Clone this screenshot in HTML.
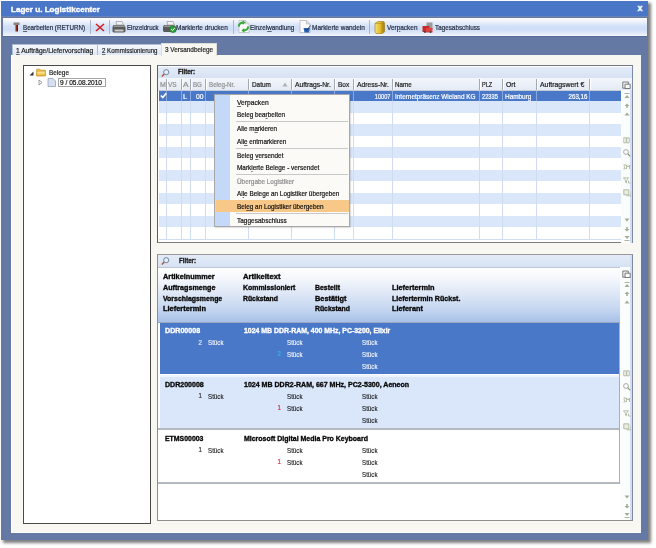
<!DOCTYPE html><html><head><meta charset="utf-8"><style>
html,body{margin:0;padding:0;}
body{width:656px;height:548px;position:relative;overflow:hidden;background:#fff;font-family:"Liberation Sans",sans-serif;}
div{box-sizing:border-box;}
.t{position:absolute;white-space:nowrap;line-height:normal;-webkit-text-stroke:0.2px currentColor;}
.b{-webkit-text-stroke:0.35px currentColor;}
u{text-decoration:underline;text-decoration-thickness:0.6px;text-underline-offset:1px;text-decoration-color:rgba(0,0,0,0.55);}
</style></head><body><div id="w" style="position:absolute;left:0;top:0;width:656px;height:548px;">
<div style="position:absolute;left:3px;top:3px;width:648px;height:540px;background:rgba(0,0,0,0.5);filter:blur(1.5px);"></div>
<div style="position:absolute;left:1px;top:1px;width:647px;height:539px;background:#647aa5;"></div>
<div style="position:absolute;left:1px;top:15.3px;width:647px;height:2.2px;background:#6b82b5;"></div>
<div style="position:absolute;left:1px;top:1px;width:647px;height:14.6px;background:#4a76c8;"></div>
<div class="t b" style="left:10.5px;top:4.67px;font-size:8.1px;color:#fff;font-weight:bold;transform:scaleX(0.9987);transform-origin:0 0;">Lager u. Logistikcenter</div>
<div class="t b" style="left:637.6px;top:3.24px;font-size:8.8px;color:#fff;font-weight:bold;">x</div>
<div style="position:absolute;left:3px;top:17.5px;width:644px;height:19.5px;background:linear-gradient(#fbfcfe 0%,#f2f5fc 15%,#d3e1f7 45%,#cfddf6 65%,#e4ecfa 88%,#f6f9fd 100%);border-bottom:1px solid #566b99;"></div>
<svg style="position:absolute;left:12px;top:21px;" width="9" height="11" viewBox="0 0 9 11"><defs><linearGradient id="st" x1="0" x2="1"><stop offset="0" stop-color="#e8a090"/><stop offset="0.5" stop-color="#8a2a18"/><stop offset="1" stop-color="#3a1a10"/></linearGradient></defs><path d="M1.5 1.5 h6 v2.5 h-6z" fill="#8a8480"/><path d="M3 4 h3 v6.5 h-3z" fill="url(#st)"/></svg>
<div class="t" style="left:22.9px;top:22.94px;font-size:7.8px;color:#1c2438;font-weight:normal;transform:scaleX(0.7991);transform-origin:0 0;"><u>B</u>earbeiten (RETURN)</div>
<div style="position:absolute;left:90px;top:19.5px;width:1px;height:14px;background:#a9b6cc;"></div>
<svg style="position:absolute;left:95px;top:23px;" width="10" height="9" viewBox="0 0 10 9"><path d="M1 1 L9 8 M9 1 L1 8" stroke="#d42020" stroke-width="1.6"/></svg>
<div style="position:absolute;left:109px;top:19.5px;width:1px;height:14px;background:#a9b6cc;"></div>
<svg style="position:absolute;left:112px;top:20px;" width="14" height="13" viewBox="0 0 14 13"><path d="M4 1.5 l6 0 l1.5 3.5 h-7z" fill="#f2f2f2" stroke="#888" stroke-width="0.6"/><path d="M1.5 5 h10.5 l1.5 2 v4.5 l-1.5 1 h-10.5 l-1 -1 v-4.5z" fill="#5a5a5a"/><path d="M2 5.5 h10 l1 1.5 h-11.5z" fill="#9a9a9a"/><path d="M2.5 9.5 h9 v2 h-9z" fill="#c8c8c8"/></svg>
<div class="t" style="left:126.5px;top:22.94px;font-size:7.8px;color:#1c2438;font-weight:normal;transform:scaleX(0.7863);transform-origin:0 0;">Einzeldruck</div>
<svg style="position:absolute;left:162.5px;top:20px;" width="14" height="13" viewBox="0 0 14 13"><path d="M4 1.5 l6 0 l1.5 3.5 h-7z" fill="#f2f2f2" stroke="#888" stroke-width="0.6"/><path d="M1 5 h10 l1.5 2 v4 l-1.5 1 h-10 l-1 -1 v-4z" fill="#5a5a5a"/><path d="M1.5 5.5 h9.5 l1 1.5 h-11z" fill="#9a9a9a"/><circle cx="10" cy="9.2" r="3.4" fill="#2e9e3a" stroke="#1e6e2a" stroke-width="0.5"/><path d="M8.2 9.2 l1.3 1.4 l2.3 -2.6" stroke="#fff" stroke-width="1" fill="none"/></svg>
<div class="t" style="left:175.9px;top:22.94px;font-size:7.8px;color:#1c2438;font-weight:normal;transform:scaleX(0.8299);transform-origin:0 0;">Markierte drucken</div>
<div style="position:absolute;left:233px;top:19.5px;width:1px;height:14px;background:#a9b6cc;"></div>
<svg style="position:absolute;left:236.5px;top:20px;" width="13" height="13" viewBox="0 0 13 13"><path d="M2 0.5 h6.5 l3.5 3.5 v8.5 h-10z" fill="#fcfcfc" stroke="#b8b8b8" stroke-width="0.7"/><path d="M8.5 0.5 v3.5 h3.5" fill="#e0e0e0" stroke="#b8b8b8" stroke-width="0.6"/><path d="M0.8 6.5 a5 5 0 0 1 5 -5 v-1.3 l2.8 2.4 l-2.8 2.4 v-1.3 a3 3 0 0 0 -3 3z" fill="#3aaa3a"/><path d="M12.2 6.5 a5 5 0 0 1 -5 5 v1.3 l-2.8 -2.4 l2.8 -2.4 v1.3 a3 3 0 0 0 3 -3z" fill="#3aaa3a"/></svg>
<div class="t" style="left:249.5px;top:22.94px;font-size:7.8px;color:#1c2438;font-weight:normal;transform:scaleX(0.8090);transform-origin:0 0;">Einzel<u>w</u>andlung</div>
<svg style="position:absolute;left:299px;top:20px;" width="13" height="13" viewBox="0 0 13 13"><path d="M1 0.5 h6.5 l3.5 3.5 v8.5 h-10z" fill="#fcfcfc" stroke="#b0b0b0" stroke-width="0.7"/><path d="M7.5 0.5 v3.5 h3.5" fill="#e0e0e0" stroke="#b0b0b0" stroke-width="0.6"/><path d="M4.5 8 h6.5 l-1 4.5 h-4.5z" fill="#2a64b0"/><path d="M6 9 l1.5 1.5 l4 -5" stroke="#1a3a70" stroke-width="0.9" fill="none"/></svg>
<div class="t" style="left:311.6px;top:22.94px;font-size:7.8px;color:#1c2438;font-weight:normal;transform:scaleX(0.8286);transform-origin:0 0;">Markierte wandeln</div>
<div style="position:absolute;left:369px;top:19.5px;width:1px;height:14px;background:#a9b6cc;"></div>
<svg style="position:absolute;left:374px;top:20.5px;" width="11" height="13" viewBox="0 0 11 13"><defs><linearGradient id="bx" x1="0" x2="1"><stop offset="0" stop-color="#f8e070"/><stop offset="0.6" stop-color="#e0b828"/><stop offset="1" stop-color="#a07a10"/></linearGradient></defs><path d="M1 2.5 l3 -2 h5.5 l1 1.5 v9 l-2.5 1.5 h-6l-1 -1.5z" fill="url(#bx)" stroke="#9a7a10" stroke-width="0.6"/><path d="M1 2.5 h7 l2.5 -1.5 M8 2.5 v10" stroke="#b08a18" stroke-width="0.6" fill="none"/></svg>
<div class="t" style="left:386.5px;top:22.94px;font-size:7.8px;color:#1c2438;font-weight:normal;transform:scaleX(0.8275);transform-origin:0 0;">Ver<u>p</u>acken</div>
<svg style="position:absolute;left:421.5px;top:22px;" width="12" height="11" viewBox="0 0 12 11"><path d="M4.5 0.5 h6 v7 h-6z" fill="#9a9a9a"/><path d="M0.5 4 h7 v6 h-7z" fill="#c82a2a"/><path d="M4 6 h6.5 v4.5 h-6.5z" fill="#e04040"/><circle cx="3" cy="10" r="1" fill="#444"/><circle cx="8.5" cy="10" r="1" fill="#444"/></svg>
<div class="t" style="left:434.6px;top:22.94px;font-size:7.8px;color:#1c2438;font-weight:normal;transform:scaleX(0.8109);transform-origin:0 0;">Tagesabschluss</div>
<div style="position:absolute;left:11px;top:55px;width:630px;height:478px;background:#f8f7f1;border-left:1px solid #fff;border-bottom:1px solid #fff;border-right:1px solid #f4f8fc;"></div>
<div style="position:absolute;left:12px;top:43.8px;width:85.5px;height:11.4px;background:linear-gradient(#f6f8fd,#dfe8f6);border:1px solid #aebcd4;border-bottom:none;border-right:none;"></div>
<div style="position:absolute;left:97px;top:43.8px;width:64px;height:11.4px;background:linear-gradient(#f6f8fd,#dfe8f6);border:1px solid #aebcd4;border-bottom:none;border-right:none;"></div>
<div style="position:absolute;left:161px;top:43px;width:55.5px;height:13px;background:#f8f7f1;border:1px solid #dcdcd8;border-bottom:none;"></div>
<div class="t" style="left:16.4px;top:46.12px;font-size:7.6px;color:#1a1a1a;font-weight:normal;transform:scaleX(0.8744);transform-origin:0 0;"><u>1</u> Aufträge/Liefervorschlag</div>
<div class="t" style="left:101.7px;top:46.12px;font-size:7.6px;color:#1a1a1a;font-weight:normal;transform:scaleX(0.8061);transform-origin:0 0;"><u>2</u> Kommissionierung</div>
<div class="t" style="left:165.1px;top:44.82px;font-size:7.6px;color:#1a1a1a;font-weight:normal;transform:scaleX(0.8450);transform-origin:0 0;">3 Versandbelege</div>
<div style="position:absolute;left:23px;top:65px;width:128px;height:459px;background:#fff;border:1px solid #4a4a4a;"></div>
<svg style="position:absolute;left:28.5px;top:70.5px;" width="5" height="5" viewBox="0 0 5 5"><path d="M4.5 0.5 v4 h-4z" fill="#333"/></svg>
<svg style="position:absolute;left:35.5px;top:68px;" width="10" height="8.5" viewBox="0 0 10 8.5"><defs><linearGradient id="fd" x1="0" y1="0" x2="0" y2="1"><stop offset="0" stop-color="#fff2b0"/><stop offset="1" stop-color="#e8b830"/></linearGradient></defs><path d="M0.7 1.2 h3.2 l1 1 h4.4 v5.6 h-8.6z" fill="#f0c850" stroke="#c89020" stroke-width="0.7"/><path d="M0.7 3.2 h8.6 v4.6 h-8.6z" fill="url(#fd)" stroke="#c89020" stroke-width="0.6"/></svg>
<div class="t" style="left:48.5px;top:69.07px;font-size:7px;color:#222;font-weight:normal;transform:scaleX(0.9176);transform-origin:0 0;">Belege</div>
<svg style="position:absolute;left:38px;top:79px;" width="5" height="7" viewBox="0 0 5 7"><path d="M1 1 l3 2.5 l-3 2.5z" fill="none" stroke="#888" stroke-width="0.8"/></svg>
<svg style="position:absolute;left:47px;top:78px;" width="9" height="9" viewBox="0 0 9 9"><path d="M1 0.5 h5 l2.5 2.5 v5.5 h-7.5z" fill="#d8e0f0" stroke="#8898b8" stroke-width="0.7"/></svg>
<div style="position:absolute;left:57.5px;top:78px;width:48px;height:8.5px;background:#fff;border:1px solid #a4a4a4;"></div>
<div class="t" style="left:59.5px;top:78.67px;font-size:7px;color:#111;font-weight:normal;transform:scaleX(0.9384);transform-origin:0 0;">9 / 05.08.2010</div>
<div style="position:absolute;left:157px;top:65.4px;width:475.5px;height:178.1px;background:#fff;border:1px solid #5e5e5e;border-top-color:#6e7482;border-bottom-color:#7e7e7e;border-right-color:#7d8aa6;"></div>
<div style="position:absolute;left:158px;top:66.5px;width:473.5px;height:11px;background:linear-gradient(#e4ebf7,#d6e2f4);"></div>
<svg style="position:absolute;left:161px;top:68.5px;" width="9" height="8" viewBox="0 0 9 8"><circle cx="5.2" cy="3.2" r="2.6" fill="#dfeefc" stroke="#6a7a90" stroke-width="0.9"/><path d="M3.3 5 L0.8 7.5" stroke="#b05030" stroke-width="1.4"/></svg>
<div class="t b" style="left:178.3px;top:68.27px;font-size:7px;color:#222;font-weight:bold;transform:scaleX(0.8743);transform-origin:0 0;">Filter:</div>
<div style="position:absolute;left:158px;top:77.5px;width:473.5px;height:13.3px;background:linear-gradient(#f3f6fb,#e4ebf6);border-bottom:1px solid #c4ccda;"></div>
<div style="position:absolute;left:166.3px;top:79px;width:1px;height:10.5px;background:#a4aab4;border-right:1px solid #fff;width:2px;"></div>
<div style="position:absolute;left:181.0px;top:79px;width:1px;height:10.5px;background:#a4aab4;border-right:1px solid #fff;width:2px;"></div>
<div style="position:absolute;left:190.3px;top:79px;width:1px;height:10.5px;background:#a4aab4;border-right:1px solid #fff;width:2px;"></div>
<div style="position:absolute;left:205.0px;top:79px;width:1px;height:10.5px;background:#a4aab4;border-right:1px solid #fff;width:2px;"></div>
<div style="position:absolute;left:248.3px;top:79px;width:1px;height:10.5px;background:#a4aab4;border-right:1px solid #fff;width:2px;"></div>
<div style="position:absolute;left:291.3px;top:79px;width:1px;height:10.5px;background:#a4aab4;border-right:1px solid #fff;width:2px;"></div>
<div style="position:absolute;left:334.3px;top:79px;width:1px;height:10.5px;background:#a4aab4;border-right:1px solid #fff;width:2px;"></div>
<div style="position:absolute;left:352.9px;top:79px;width:1px;height:10.5px;background:#a4aab4;border-right:1px solid #fff;width:2px;"></div>
<div style="position:absolute;left:391.9px;top:79px;width:1px;height:10.5px;background:#a4aab4;border-right:1px solid #fff;width:2px;"></div>
<div style="position:absolute;left:478.5px;top:79px;width:1px;height:10.5px;background:#a4aab4;border-right:1px solid #fff;width:2px;"></div>
<div style="position:absolute;left:502.2px;top:79px;width:1px;height:10.5px;background:#a4aab4;border-right:1px solid #fff;width:2px;"></div>
<div style="position:absolute;left:536.3px;top:79px;width:1px;height:10.5px;background:#a4aab4;border-right:1px solid #fff;width:2px;"></div>
<div style="position:absolute;left:588.5px;top:79px;width:1px;height:10.5px;background:#a4aab4;border-right:1px solid #fff;width:2px;"></div>
<div class="t" style="left:160.0px;top:80.87px;font-size:7px;color:#8e8e8e;font-weight:normal;transform:scaleX(0.9947);transform-origin:0 0;">M</div>
<div class="t" style="left:168.3px;top:80.87px;font-size:7px;color:#8e8e8e;font-weight:normal;transform:scaleX(0.9316);transform-origin:0 0;">VS</div>
<div class="t" style="left:182.9px;top:80.87px;font-size:7px;color:#8e8e8e;font-weight:normal;transform:scaleX(1.1779);transform-origin:0 0;">A</div>
<div class="t" style="left:193.2px;top:80.87px;font-size:7px;color:#8e8e8e;font-weight:normal;transform:scaleX(0.8800);transform-origin:0 0;">BG</div>
<div class="t" style="left:208.7px;top:80.87px;font-size:7px;color:#8e8e8e;font-weight:normal;transform:scaleX(0.8877);transform-origin:0 0;">Beleg-Nr.</div>
<div class="t" style="left:251.7px;top:80.87px;font-size:7px;color:#181818;font-weight:normal;transform:scaleX(0.9119);transform-origin:0 0;">Datum</div>
<svg style="position:absolute;left:282px;top:82px;" width="6" height="5" viewBox="0 0 6 5"><path d="M0.5 4.5 L3 0.5 L5.5 4.5z" fill="#b0b0b0"/></svg>
<div class="t" style="left:294.9px;top:80.87px;font-size:7px;color:#181818;font-weight:normal;transform:scaleX(0.9587);transform-origin:0 0;">Auftrags-Nr.</div>
<div class="t" style="left:338px;top:80.87px;font-size:7px;color:#181818;font-weight:normal;transform:scaleX(0.9368);transform-origin:0 0;">Box</div>
<div class="t" style="left:357px;top:80.87px;font-size:7px;color:#181818;font-weight:normal;transform:scaleX(0.9619);transform-origin:0 0;">Adress-Nr.</div>
<div class="t" style="left:395.4px;top:80.87px;font-size:7px;color:#181818;font-weight:normal;transform:scaleX(0.8891);transform-origin:0 0;">Name</div>
<div class="t" style="left:482.2px;top:80.87px;font-size:7px;color:#181818;font-weight:normal;transform:scaleX(0.7946);transform-origin:0 0;">PLZ</div>
<div class="t" style="left:505.9px;top:80.87px;font-size:7px;color:#181818;font-weight:normal;transform:scaleX(0.9774);transform-origin:0 0;">Ort</div>
<div class="t" style="left:539.6px;top:80.87px;font-size:7px;color:#181818;font-weight:normal;transform:scaleX(0.9794);transform-origin:0 0;">Auftragswert €</div>
<div style="position:absolute;left:159px;top:90.8px;width:462px;height:10.33px;background:#4a78c8;"></div>
<div style="position:absolute;left:159px;top:101.08px;width:462px;height:11.530000000000001px;background:#dae7fb;"></div>
<div style="position:absolute;left:159px;top:112.56px;width:462px;height:11.530000000000001px;background:#ffffff;"></div>
<div style="position:absolute;left:159px;top:124.04px;width:462px;height:11.530000000000001px;background:#dae7fb;"></div>
<div style="position:absolute;left:159px;top:135.52px;width:462px;height:11.530000000000001px;background:#ffffff;"></div>
<div style="position:absolute;left:159px;top:147.0px;width:462px;height:11.530000000000001px;background:#dae7fb;"></div>
<div style="position:absolute;left:159px;top:158.48px;width:462px;height:11.530000000000001px;background:#ffffff;"></div>
<div style="position:absolute;left:159px;top:169.96px;width:462px;height:11.530000000000001px;background:#dae7fb;"></div>
<div style="position:absolute;left:159px;top:181.44px;width:462px;height:11.530000000000001px;background:#ffffff;"></div>
<div style="position:absolute;left:159px;top:192.92px;width:462px;height:11.530000000000001px;background:#dae7fb;"></div>
<div style="position:absolute;left:159px;top:204.4px;width:462px;height:11.530000000000001px;background:#ffffff;"></div>
<div style="position:absolute;left:159px;top:215.88px;width:462px;height:11.530000000000001px;background:#dae7fb;"></div>
<div style="position:absolute;left:159px;top:227.36px;width:462px;height:11.530000000000001px;background:#ffffff;"></div>
<div style="position:absolute;left:166.3px;top:90.8px;width:1px;height:148px;background:#d0dcf2;"></div>
<div style="position:absolute;left:181.0px;top:90.8px;width:1px;height:148px;background:#d0dcf2;"></div>
<div style="position:absolute;left:190.3px;top:90.8px;width:1px;height:148px;background:#d0dcf2;"></div>
<div style="position:absolute;left:205.0px;top:90.8px;width:1px;height:148px;background:#d0dcf2;"></div>
<div style="position:absolute;left:248.3px;top:90.8px;width:1px;height:148px;background:#d0dcf2;"></div>
<div style="position:absolute;left:291.3px;top:90.8px;width:1px;height:148px;background:#d0dcf2;"></div>
<div style="position:absolute;left:334.3px;top:90.8px;width:1px;height:148px;background:#d0dcf2;"></div>
<div style="position:absolute;left:352.9px;top:90.8px;width:1px;height:148px;background:#d0dcf2;"></div>
<div style="position:absolute;left:391.9px;top:90.8px;width:1px;height:148px;background:#d0dcf2;"></div>
<div style="position:absolute;left:478.5px;top:90.8px;width:1px;height:148px;background:#d0dcf2;"></div>
<div style="position:absolute;left:502.2px;top:90.8px;width:1px;height:148px;background:#d0dcf2;"></div>
<div style="position:absolute;left:536.3px;top:90.8px;width:1px;height:148px;background:#d0dcf2;"></div>
<div style="position:absolute;left:588.5px;top:90.8px;width:1px;height:148px;background:#d0dcf2;"></div>
<div style="position:absolute;left:159px;top:238.6px;width:462px;height:1px;background:#d0dcf2;"></div>
<div style="position:absolute;left:166.3px;top:90.8px;width:1px;height:10.3px;background:#8aa8e0;"></div>
<div style="position:absolute;left:181.0px;top:90.8px;width:1px;height:10.3px;background:#8aa8e0;"></div>
<div style="position:absolute;left:190.3px;top:90.8px;width:1px;height:10.3px;background:#8aa8e0;"></div>
<div style="position:absolute;left:205.0px;top:90.8px;width:1px;height:10.3px;background:#8aa8e0;"></div>
<div style="position:absolute;left:248.3px;top:90.8px;width:1px;height:10.3px;background:#8aa8e0;"></div>
<div style="position:absolute;left:291.3px;top:90.8px;width:1px;height:10.3px;background:#8aa8e0;"></div>
<div style="position:absolute;left:334.3px;top:90.8px;width:1px;height:10.3px;background:#8aa8e0;"></div>
<div style="position:absolute;left:352.9px;top:90.8px;width:1px;height:10.3px;background:#8aa8e0;"></div>
<div style="position:absolute;left:391.9px;top:90.8px;width:1px;height:10.3px;background:#8aa8e0;"></div>
<div style="position:absolute;left:478.5px;top:90.8px;width:1px;height:10.3px;background:#8aa8e0;"></div>
<div style="position:absolute;left:502.2px;top:90.8px;width:1px;height:10.3px;background:#8aa8e0;"></div>
<div style="position:absolute;left:536.3px;top:90.8px;width:1px;height:10.3px;background:#8aa8e0;"></div>
<div style="position:absolute;left:588.5px;top:90.8px;width:1px;height:10.3px;background:#8aa8e0;"></div>
<svg style="position:absolute;left:160px;top:92px;" width="7" height="7" viewBox="0 0 7 7"><path d="M0.8 3.5 L2.8 5.6 L6.2 1.2" stroke="#fff" stroke-width="1.6" fill="none"/></svg>
<div class="t" style="left:183.2px;top:92.57px;font-size:7px;color:#fff;font-weight:normal;transform:scaleX(1.0276);transform-origin:0 0;">L</div>
<div class="t" style="left:195.5px;top:92.57px;font-size:7px;color:#fff;font-weight:normal;transform:scaleX(0.9634);transform-origin:0 0;">00</div>
<div class="t" style="right:266px;top:92.57px;font-size:7px;color:#fff;font-weight:normal;transform:scaleX(0.8015);transform-origin:100% 0;">10007</div>
<div class="t" style="left:394.9px;top:92.57px;font-size:7px;color:#fff;font-weight:normal;transform:scaleX(0.9155);transform-origin:0 0;">Internetpräsenz Wieland KG</div>
<div class="t" style="left:481.5px;top:92.57px;font-size:7px;color:#fff;font-weight:normal;transform:scaleX(0.8118);transform-origin:0 0;">22335</div>
<div class="t" style="left:504.6px;top:92.57px;font-size:7px;color:#fff;font-weight:normal;transform:scaleX(0.9171);transform-origin:0 0;">Hamburg</div>
<div class="t" style="right:68.70000000000005px;top:92.57px;font-size:7px;color:#fff;font-weight:normal;transform:scaleX(0.8782);transform-origin:100% 0;">263,16</div>
<div style="position:absolute;left:621px;top:89.5px;width:10.5px;height:153px;background:#fbfcfe;"></div>
<div style="position:absolute;left:629.5px;top:89.5px;width:2px;height:153px;background:#d4def0;"></div>
<svg style="position:absolute;left:621.5px;top:80.5px;" width="9" height="8" viewBox="0 0 9 8"><path d="M0.8 1 h5.5 v6.2 h-5.5z" fill="#f4f4f4" stroke="#6e6e6e" stroke-width="0.9"/><path d="M3 3.2 h5.2 v4.3 h-5.2z" fill="#fafafa" stroke="#6e6e6e" stroke-width="0.9"/></svg>
<svg style="position:absolute;left:623.5px;top:92.5px;" width="6" height="5" viewBox="0 0 6 5"><path d="M0.5 0.5 h5" stroke="#a3ad93" stroke-width="0.9"/><path d="M0.5 5 L3 2 L5.5 5z" fill="#a3ad93"/></svg>
<svg style="position:absolute;left:623.5px;top:102.5px;" width="6" height="5" viewBox="0 0 6 5"><path d="M0.5 3 L3 0.5 L5.5 3z M2.2 3 h1.6 v2 h-1.6z" fill="#a3ad93"/></svg>
<svg style="position:absolute;left:623.5px;top:111.5px;" width="6" height="5" viewBox="0 0 6 5"><path d="M0.5 3.5 L3 0.5 L5.5 3.5z" fill="#a3ad93"/></svg>
<svg style="position:absolute;left:623.5px;top:218px;" width="6" height="5" viewBox="0 0 6 5"><path d="M0.5 0.5 L3 3.5 L5.5 0.5z" fill="#a3ad93"/></svg>
<svg style="position:absolute;left:623.5px;top:226.5px;" width="6" height="5" viewBox="0 0 6 5"><path d="M2.2 0 h1.6 v2 h-1.6z M0.5 2 L3 4.5 L5.5 2z" fill="#a3ad93"/></svg>
<svg style="position:absolute;left:623.5px;top:235.5px;" width="6" height="5" viewBox="0 0 6 5"><path d="M0.5 0 L3 3 L5.5 0z" fill="#a3ad93"/><path d="M0.5 4.5 h5" stroke="#a3ad93" stroke-width="0.9"/></svg>
<svg style="position:absolute;left:622.5px;top:136.5px;" width="8" height="8" viewBox="0 0 8 8"><path d="M0.8 0.8 h2.4 v5 h-2.4z M3.8 0.8 h2.4 v5 h-2.4z" fill="none" stroke="#a3ad93" stroke-width="0.8"/></svg>
<svg style="position:absolute;left:622.5px;top:149px;" width="8" height="8" viewBox="0 0 8 8"><circle cx="3" cy="3" r="2.4" fill="none" stroke="#a0a0a0" stroke-width="0.9"/><path d="M4.7 4.7 L7.3 7.3" stroke="#8a9470" stroke-width="1.2"/></svg>
<svg style="position:absolute;left:622.5px;top:163.5px;" width="8" height="8" viewBox="0 0 8 8"><path d="M0.5 0.8 h2 l-1.5 2 l1.5 2 h-2 M3.5 5 v-4 l1.5 2 l1.5 -2 v4" fill="none" stroke="#a3ad93" stroke-width="0.8"/></svg>
<svg style="position:absolute;left:622.5px;top:176.5px;" width="8" height="8" viewBox="0 0 8 8"><path d="M0.5 0.8 h5 l-2 2.5 v2.5 l-1 -0.6 v-1.9z" fill="none" stroke="#a3ad93" stroke-width="0.8"/><path d="M5.5 3.5 v2.5 h2" stroke="#a3ad93" stroke-width="0.8" fill="none"/></svg>
<svg style="position:absolute;left:622.5px;top:188.5px;" width="8" height="8" viewBox="0 0 8 8"><path d="M0.8 0.8 h5 v5 h-5z" fill="#e8eee0" stroke="#a3ad93" stroke-width="0.8"/><path d="M3.5 6.8 h4.5 v-3" fill="none" stroke="#a3ad93" stroke-width="0.8"/></svg>
<div style="position:absolute;left:157px;top:254px;width:475.5px;height:267px;background:#fff;border:1px solid #8e8e8e;border-top-color:#9a9a9a;border-right-color:#7d8aa6;"></div>
<div style="position:absolute;left:158px;top:255px;width:473.5px;height:12px;background:linear-gradient(#e4ebf7,#d6e2f4);"></div>
<svg style="position:absolute;left:161px;top:257px;" width="9" height="8" viewBox="0 0 9 8"><circle cx="5.2" cy="3.2" r="2.6" fill="#dfeefc" stroke="#6a7a90" stroke-width="0.9"/><path d="M3.3 5 L0.8 7.5" stroke="#b05030" stroke-width="1.4"/></svg>
<div class="t b" style="left:178.5px;top:256.87px;font-size:7px;color:#222;font-weight:bold;transform:scaleX(0.8743);transform-origin:0 0;">Filter:</div>
<div style="position:absolute;left:158px;top:267px;width:462.5px;height:55.5px;background:linear-gradient(#ffffff 0%,#f0f4fb 25%,#c9d9f1 72%,#a9c1e9 100%);border-right:1px solid #97a3b6;border-top:1px solid #c0c8d6;border-bottom:1px solid #9aa8c0;"></div>
<div class="t b" style="left:163.3px;top:271.90px;font-size:7.4px;color:#080808;font-weight:bold;transform:scaleX(0.9899);transform-origin:0 0;">Artikelnummer</div>
<div class="t b" style="left:163.3px;top:282.80px;font-size:7.4px;color:#080808;font-weight:bold;transform:scaleX(0.9673);transform-origin:0 0;">Auftragsmenge</div>
<div class="t b" style="left:163.3px;top:293.60px;font-size:7.4px;color:#080808;font-weight:bold;transform:scaleX(0.9384);transform-origin:0 0;">Vorschlagsmenge</div>
<div class="t b" style="left:163.3px;top:304.10px;font-size:7.4px;color:#080808;font-weight:bold;transform:scaleX(1.0055);transform-origin:0 0;">Liefertermin</div>
<div class="t b" style="left:242.6px;top:271.90px;font-size:7.4px;color:#080808;font-weight:bold;transform:scaleX(1.0362);transform-origin:0 0;">Artikeltext</div>
<div class="t b" style="left:242.6px;top:282.80px;font-size:7.4px;color:#080808;font-weight:bold;transform:scaleX(0.9388);transform-origin:0 0;">Kommissioniert</div>
<div class="t b" style="left:242.6px;top:293.60px;font-size:7.4px;color:#080808;font-weight:bold;transform:scaleX(0.9252);transform-origin:0 0;">Rückstand</div>
<div class="t b" style="left:315.2px;top:282.80px;font-size:7.4px;color:#080808;font-weight:bold;transform:scaleX(0.9353);transform-origin:0 0;">Bestellt</div>
<div class="t b" style="left:315.2px;top:293.60px;font-size:7.4px;color:#080808;font-weight:bold;transform:scaleX(0.9950);transform-origin:0 0;">Bestätigt</div>
<div class="t b" style="left:315.2px;top:304.10px;font-size:7.4px;color:#080808;font-weight:bold;transform:scaleX(0.9252);transform-origin:0 0;">Rückstand</div>
<div class="t b" style="left:391.5px;top:282.80px;font-size:7.4px;color:#080808;font-weight:bold;transform:scaleX(0.9938);transform-origin:0 0;">Liefertermin</div>
<div class="t b" style="left:391.5px;top:293.60px;font-size:7.4px;color:#080808;font-weight:bold;transform:scaleX(0.9574);transform-origin:0 0;">Liefertermin Rückst.</div>
<div class="t b" style="left:391.5px;top:304.10px;font-size:7.4px;color:#080808;font-weight:bold;transform:scaleX(0.9920);transform-origin:0 0;">Lieferant</div>
<div style="position:absolute;left:159.5px;top:322.6px;width:460.5px;height:51.89999999999998px;background:#4a78c8;"></div>
<div class="t b" style="left:164.6px;top:325.80px;font-size:7.4px;color:#ffffff;font-weight:bold;transform:scaleX(0.9615);transform-origin:0 0;">DDR00008</div>
<div class="t b" style="left:243.5px;top:325.80px;font-size:7.4px;color:#ffffff;font-weight:bold;transform:scaleX(0.9350);transform-origin:0 0;">1024 MB DDR-RAM, 400 MHz, PC-3200, Elixir</div>
<div class="t" style="right:454.5px;top:338.56px;font-size:7px;color:#e0e6f0;font-weight:normal;transform:scaleX(0.8734);transform-origin:100% 0;">2</div>
<div class="t" style="left:207.6px;top:338.38px;font-size:7.2px;color:#ffffff;font-weight:normal;transform:scaleX(0.8608);transform-origin:0 0;-webkit-text-stroke:0.08px currentColor;">Stück</div>
<div class="t" style="left:286.5px;top:338.38px;font-size:7.2px;color:#ffffff;font-weight:normal;transform:scaleX(0.8608);transform-origin:0 0;-webkit-text-stroke:0.08px currentColor;">Stück</div>
<div class="t" style="right:375.2px;top:350.37px;font-size:7px;color:#30b4f0;font-weight:normal;transform:scaleX(0.8734);transform-origin:100% 0;">2</div>
<div class="t" style="left:286.5px;top:350.18px;font-size:7.2px;color:#ffffff;font-weight:normal;transform:scaleX(0.8608);transform-origin:0 0;-webkit-text-stroke:0.08px currentColor;">Stück</div>
<div class="t" style="left:361.5px;top:338.38px;font-size:7.2px;color:#ffffff;font-weight:normal;transform:scaleX(0.8608);transform-origin:0 0;-webkit-text-stroke:0.08px currentColor;">Stück</div>
<div class="t" style="left:361.5px;top:350.18px;font-size:7.2px;color:#ffffff;font-weight:normal;transform:scaleX(0.8608);transform-origin:0 0;-webkit-text-stroke:0.08px currentColor;">Stück</div>
<div class="t" style="left:361.5px;top:362.48px;font-size:7.2px;color:#ffffff;font-weight:normal;transform:scaleX(0.8608);transform-origin:0 0;-webkit-text-stroke:0.08px currentColor;">Stück</div>
<div style="position:absolute;left:159.5px;top:374.5px;width:460.5px;height:55.30000000000001px;background:#dae7fb;"></div>
<div style="position:absolute;left:159.5px;top:374.5px;width:460.5px;height:2px;background:#eef3fb;"></div>
<div style="position:absolute;left:158px;top:428.2px;width:462px;height:1.6px;background:#b4b8bf;"></div>
<div class="t b" style="left:164.6px;top:379.60px;font-size:7.4px;color:#080808;font-weight:bold;transform:scaleX(0.9528);transform-origin:0 0;">DDR200008</div>
<div class="t b" style="left:243.5px;top:379.60px;font-size:7.4px;color:#080808;font-weight:bold;transform:scaleX(0.9518);transform-origin:0 0;">1024 MB DDR2-RAM, 667 MHz, PC2-5300, Aeneon</div>
<div class="t" style="right:454.5px;top:392.37px;font-size:7px;color:#333;font-weight:normal;transform:scaleX(0.8734);transform-origin:100% 0;">1</div>
<div class="t" style="left:207.6px;top:392.18px;font-size:7.2px;color:#080808;font-weight:normal;transform:scaleX(0.8608);transform-origin:0 0;-webkit-text-stroke:0.08px currentColor;">Stück</div>
<div class="t" style="left:286.5px;top:392.18px;font-size:7.2px;color:#080808;font-weight:normal;transform:scaleX(0.8608);transform-origin:0 0;-webkit-text-stroke:0.08px currentColor;">Stück</div>
<div class="t" style="right:375.2px;top:404.17px;font-size:7px;color:#d83030;font-weight:normal;transform:scaleX(0.8734);transform-origin:100% 0;">1</div>
<div class="t" style="left:286.5px;top:403.98px;font-size:7.2px;color:#080808;font-weight:normal;transform:scaleX(0.8608);transform-origin:0 0;-webkit-text-stroke:0.08px currentColor;">Stück</div>
<div class="t" style="left:361.5px;top:392.18px;font-size:7.2px;color:#080808;font-weight:normal;transform:scaleX(0.8608);transform-origin:0 0;-webkit-text-stroke:0.08px currentColor;">Stück</div>
<div class="t" style="left:361.5px;top:403.98px;font-size:7.2px;color:#080808;font-weight:normal;transform:scaleX(0.8608);transform-origin:0 0;-webkit-text-stroke:0.08px currentColor;">Stück</div>
<div class="t" style="left:361.5px;top:416.28px;font-size:7.2px;color:#080808;font-weight:normal;transform:scaleX(0.8608);transform-origin:0 0;-webkit-text-stroke:0.08px currentColor;">Stück</div>
<div style="position:absolute;left:159.5px;top:429.8px;width:460.5px;height:54.0px;background:#ffffff;"></div>
<div style="position:absolute;left:158px;top:482.2px;width:462px;height:1.6px;background:#b4b8bf;"></div>
<div class="t b" style="left:164.6px;top:433.50px;font-size:7.4px;color:#080808;font-weight:bold;transform:scaleX(0.9360);transform-origin:0 0;">ETMS00003</div>
<div class="t b" style="left:243.5px;top:433.50px;font-size:7.4px;color:#080808;font-weight:bold;transform:scaleX(0.9433);transform-origin:0 0;">Microsoft Digital Media Pro Keyboard</div>
<div class="t" style="right:454.5px;top:446.26px;font-size:7px;color:#333;font-weight:normal;transform:scaleX(0.8734);transform-origin:100% 0;">1</div>
<div class="t" style="left:207.6px;top:446.08px;font-size:7.2px;color:#080808;font-weight:normal;transform:scaleX(0.8608);transform-origin:0 0;-webkit-text-stroke:0.08px currentColor;">Stück</div>
<div class="t" style="left:286.5px;top:446.08px;font-size:7.2px;color:#080808;font-weight:normal;transform:scaleX(0.8608);transform-origin:0 0;-webkit-text-stroke:0.08px currentColor;">Stück</div>
<div class="t" style="right:375.2px;top:458.06px;font-size:7px;color:#d83030;font-weight:normal;transform:scaleX(0.8734);transform-origin:100% 0;">1</div>
<div class="t" style="left:286.5px;top:457.88px;font-size:7.2px;color:#080808;font-weight:normal;transform:scaleX(0.8608);transform-origin:0 0;-webkit-text-stroke:0.08px currentColor;">Stück</div>
<div class="t" style="left:361.5px;top:446.08px;font-size:7.2px;color:#080808;font-weight:normal;transform:scaleX(0.8608);transform-origin:0 0;-webkit-text-stroke:0.08px currentColor;">Stück</div>
<div class="t" style="left:361.5px;top:457.88px;font-size:7.2px;color:#080808;font-weight:normal;transform:scaleX(0.8608);transform-origin:0 0;-webkit-text-stroke:0.08px currentColor;">Stück</div>
<div class="t" style="left:361.5px;top:470.18px;font-size:7.2px;color:#080808;font-weight:normal;transform:scaleX(0.8608);transform-origin:0 0;-webkit-text-stroke:0.08px currentColor;">Stück</div>
<div style="position:absolute;left:620px;top:267px;width:11.5px;height:253px;background:#fbfcfe;"></div>
<div style="position:absolute;left:619.3px;top:322.5px;width:1px;height:161px;background:#a8b0bc;"></div>
<div style="position:absolute;left:629.5px;top:255px;width:2px;height:265px;background:#d4def0;"></div>
<svg style="position:absolute;left:621.5px;top:270px;" width="9" height="8" viewBox="0 0 9 8"><path d="M0.8 1 h5.5 v6.2 h-5.5z" fill="#f4f4f4" stroke="#6e6e6e" stroke-width="0.9"/><path d="M3 3.2 h5.2 v4.3 h-5.2z" fill="#fafafa" stroke="#6e6e6e" stroke-width="0.9"/></svg>
<svg style="position:absolute;left:623.5px;top:282px;" width="6" height="5" viewBox="0 0 6 5"><path d="M0.5 0.5 h5" stroke="#a3ad93" stroke-width="0.9"/><path d="M0.5 5 L3 2 L5.5 5z" fill="#a3ad93"/></svg>
<svg style="position:absolute;left:623.5px;top:290.5px;" width="6" height="5" viewBox="0 0 6 5"><path d="M0.5 3 L3 0.5 L5.5 3z M2.2 3 h1.6 v2 h-1.6z" fill="#a3ad93"/></svg>
<svg style="position:absolute;left:623.5px;top:299.5px;" width="6" height="5" viewBox="0 0 6 5"><path d="M0.5 3.5 L3 0.5 L5.5 3.5z" fill="#a3ad93"/></svg>
<svg style="position:absolute;left:623.5px;top:494.5px;" width="6" height="5" viewBox="0 0 6 5"><path d="M0.5 0.5 L3 3.5 L5.5 0.5z" fill="#a3ad93"/></svg>
<svg style="position:absolute;left:623.5px;top:503.5px;" width="6" height="5" viewBox="0 0 6 5"><path d="M2.2 0 h1.6 v2 h-1.6z M0.5 2 L3 4.5 L5.5 2z" fill="#a3ad93"/></svg>
<svg style="position:absolute;left:623.5px;top:512.5px;" width="6" height="5" viewBox="0 0 6 5"><path d="M0.5 0 L3 3 L5.5 0z" fill="#a3ad93"/><path d="M0.5 4.5 h5" stroke="#a3ad93" stroke-width="0.9"/></svg>
<svg style="position:absolute;left:622.5px;top:369.5px;" width="8" height="8" viewBox="0 0 8 8"><path d="M0.8 0.8 h2.4 v5 h-2.4z M3.8 0.8 h2.4 v5 h-2.4z" fill="none" stroke="#a3ad93" stroke-width="0.8"/></svg>
<svg style="position:absolute;left:622.5px;top:383px;" width="8" height="8" viewBox="0 0 8 8"><circle cx="3" cy="3" r="2.4" fill="none" stroke="#a0a0a0" stroke-width="0.9"/><path d="M4.7 4.7 L7.3 7.3" stroke="#8a9470" stroke-width="1.2"/></svg>
<svg style="position:absolute;left:622.5px;top:397px;" width="8" height="8" viewBox="0 0 8 8"><path d="M0.5 0.8 h2 l-1.5 2 l1.5 2 h-2 M3.5 5 v-4 l1.5 2 l1.5 -2 v4" fill="none" stroke="#a3ad93" stroke-width="0.8"/></svg>
<svg style="position:absolute;left:622.5px;top:410px;" width="8" height="8" viewBox="0 0 8 8"><path d="M0.5 0.8 h5 l-2 2.5 v2.5 l-1 -0.6 v-1.9z" fill="none" stroke="#a3ad93" stroke-width="0.8"/><path d="M5.5 3.5 v2.5 h2" stroke="#a3ad93" stroke-width="0.8" fill="none"/></svg>
<svg style="position:absolute;left:622.5px;top:423px;" width="8" height="8" viewBox="0 0 8 8"><path d="M0.8 0.8 h5 v5 h-5z" fill="#e8eee0" stroke="#a3ad93" stroke-width="0.8"/><path d="M3.5 6.8 h4.5 v-3" fill="none" stroke="#a3ad93" stroke-width="0.8"/></svg>
<div style="position:absolute;left:214.3px;top:93.7px;width:136px;height:133.5px;background:#fbfaf6;border:1px solid #a8a8a8;box-shadow:1px 1px 1px rgba(0,0,0,0.12);"></div>
<div style="position:absolute;left:215.3px;top:94.7px;width:14.5px;height:131.5px;background:#c4d8f7;"></div>
<div style="position:absolute;left:215.5px;top:200.3px;width:133px;height:11.8px;background:#f8c888;"></div>
<div style="position:absolute;left:236px;top:121.0px;width:111.5px;height:1px;background:#c8c8c8;"></div>
<div style="position:absolute;left:236px;top:147.7px;width:111.5px;height:1px;background:#c8c8c8;"></div>
<div style="position:absolute;left:236px;top:174.2px;width:111.5px;height:1px;background:#c8c8c8;"></div>
<div style="position:absolute;left:236px;top:213.2px;width:111.5px;height:1px;background:#c8c8c8;"></div>
<div class="t" style="left:236.5px;top:98.20px;font-size:7.4px;color:#101010;font-weight:normal;transform:scaleX(0.9066);transform-origin:0 0;"><u>V</u>erpacken</div>
<div class="t" style="left:236.5px;top:110.10px;font-size:7.4px;color:#101010;font-weight:normal;transform:scaleX(0.8579);transform-origin:0 0;">Beleg bea<u>r</u>beiten</div>
<div class="t" style="left:236.5px;top:124.10px;font-size:7.4px;color:#101010;font-weight:normal;transform:scaleX(0.8458);transform-origin:0 0;">Alle m<u>a</u>rkieren</div>
<div class="t" style="left:236.5px;top:136.50px;font-size:7.4px;color:#101010;font-weight:normal;transform:scaleX(0.8562);transform-origin:0 0;">All<u>e</u> entmarkieren</div>
<div class="t" style="left:236.5px;top:150.80px;font-size:7.4px;color:#101010;font-weight:normal;transform:scaleX(0.8695);transform-origin:0 0;">Beleg <u>v</u>ersendet</div>
<div class="t" style="left:236.5px;top:162.90px;font-size:7.4px;color:#101010;font-weight:normal;transform:scaleX(0.8663);transform-origin:0 0;">Mark<u>i</u>erte Belege - versendet</div>
<div class="t" style="left:236.5px;top:176.50px;font-size:7.4px;color:#8a8a8a;font-weight:normal;transform:scaleX(0.8637);transform-origin:0 0;">Übergabe Logistiker</div>
<div class="t" style="left:236.5px;top:189.30px;font-size:7.4px;color:#101010;font-weight:normal;transform:scaleX(0.8613);transform-origin:0 0;">Al<u>l</u>e Belege an Logistiker übergeben</div>
<div class="t" style="left:236.5px;top:201.70px;font-size:7.4px;color:#101010;font-weight:normal;transform:scaleX(0.8628);transform-origin:0 0;">Bel<u>e</u>g an Logistiker übergeben</div>
<div class="t" style="left:236.5px;top:215.60px;font-size:7.4px;color:#101010;font-weight:normal;transform:scaleX(0.8791);transform-origin:0 0;">Ta<u>g</u>gesabschluss</div>
</div></body></html>
